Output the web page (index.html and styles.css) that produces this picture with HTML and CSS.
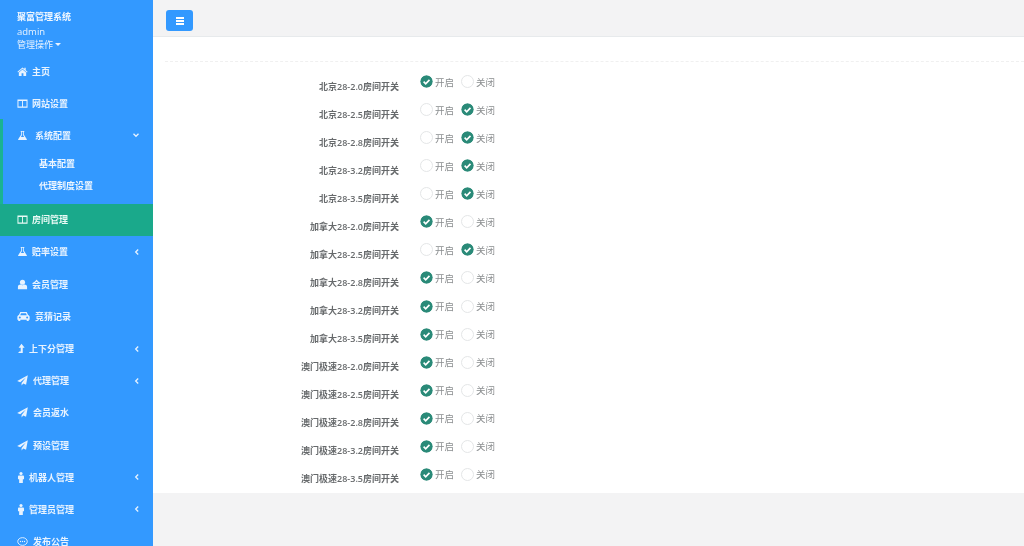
FILE: index.html
```html
<!DOCTYPE html>
<html lang="zh">
<head>
<meta charset="utf-8">
<title>房间管理</title>
<link rel="stylesheet" href="styles.css">
</head>
<body>
<svg class="defs" width="0" height="0">
  <symbol id="i-home" viewBox="0 0 12 12"><path d="M6 1.500 .5 6.300l.6.7L6 2.900l4.900 4.100.6-.7-2-1.800V2H8v1.200zM2 7.200V11h3V8h2v3h3V7.200L6 3.800z" fill="currentColor"/></symbol>
  <symbol id="i-table" viewBox="0 0 12 12"><path d="M.5 1.500h11v9H.5zM1.600 3.200v6.200h3.900V3.200zm4.900 0v6.200h3.900V3.200z" fill="currentColor" fill-rule="evenodd"/></symbol>
  <symbol id="i-flask" viewBox="0 0 12 12"><path d="M4 1h4v1h-.6v3l3.300 5.200c.3.500 0 .8-.5.800H1.800c-.5 0-.8-.3-.5-.8L4.600 5V2H4zm1.500 1v3.400L4.200 7.500h3.600L6.500 5.400V2z" fill="currentColor" fill-rule="evenodd"/></symbol>
  <symbol id="i-user" viewBox="0 0 12 12"><circle cx="6" cy="3.500" r="2.800" fill="currentColor"/><path d="M1 11.200V8.500C1 7 2.500 6.200 4 6.100c1.200.8 2.800.8 4 0 1.500.1 3 .9 3 2.400v2.700z" fill="currentColor"/></symbol>
  <symbol id="i-car" viewBox="0 0 14 12"><path d="M3.500 1h7l1.500 3.400c.9.300 1.700 1.100 1.700 2v3.100h-1V11h-2.200V9.500H3.500V11H1.300V9.500h-1V6.400c0-.9.800-1.700 1.700-2zm.8 1.400-.9 2.200h7.200l-.9-2.200zM3 5.900a1.100 1.100 0 1 0 0 2.200 1.100 1.100 0 0 0 0-2.200zm8 0a1.100 1.100 0 1 0 0 2.200 1.100 1.100 0 0 0 0-2.200z" fill="currentColor" fill-rule="evenodd"/></symbol>
  <symbol id="i-up" viewBox="2 0 8 12"><path d="M6.500.8 10 5.200H7.900V11H2.800l1.400-1.800h1.500V5.200H3.400z" fill="currentColor"/></symbol>
  <symbol id="i-plane" viewBox="0 0 12 12"><path d="M11.800.3 9.900 10.500 6.800 9.200 5 11.500V8.700L9.700 2.800 3.500 7.900 .2 6.500z" fill="currentColor"/></symbol>
  <symbol id="i-male" viewBox="2 0 8 12"><circle cx="6" cy="1.700" r="1.700" fill="currentColor"/><path d="M3.900 3.700h4.200c.7 0 1.200.5 1.200 1.200v3.100H8V12H4V8H2.700V4.900c0-.7.500-1.200 1.200-1.200z" fill="currentColor"/></symbol>
  <symbol id="i-chat" viewBox="0 0 12 12"><ellipse cx="6" cy="6" rx="5.200" ry="4.200" fill="none" stroke="currentColor"/><circle cx="3.800" cy="6" r=".7" fill="currentColor"/><circle cx="6" cy="6" r=".7" fill="currentColor"/><circle cx="8.200" cy="6" r=".7" fill="currentColor"/></symbol>
  <symbol id="i-left" viewBox="0 0 8 8"><path d="M5.200 1.500 2.700 4l2.500 2.500" fill="none" stroke="currentColor" stroke-width="1.300"/></symbol>
  <symbol id="i-down" viewBox="0 0 8 8"><path d="M1.500 2.800 4 5.300l2.500-2.500" fill="none" stroke="currentColor" stroke-width="1.300"/></symbol>
  <symbol id="i-check" viewBox="0 0 14 14"><circle cx="7" cy="7" r="6.700" fill="currentColor"/><path d="M3.900 7.200l2.200 2.200L10.200 5.200" fill="none" stroke="#fff" stroke-width="1.800"/></symbol>
</svg>
<div class="app">
  <aside class="sidebar">
    <div class="profile">
      <div class="brand">聚富管理系统</div>
      <div class="who">admin</div>
      <div class="ops">管理操作<span class="caret"></span></div>
    </div>
    <nav class="nav">
      <a class="item"><svg class="ico"><use href="#i-home"/></svg><span>主页</span></a>
      <a class="item"><svg class="ico"><use href="#i-table"/></svg><span>网站设置</span></a>
      <div class="group">
        <a class="item item-open"><svg class="ico"><use href="#i-flask"/></svg><span>系统配置</span><svg class="arrow"><use href="#i-down"/></svg></a>
        <a class="sub">基本配置</a>
        <a class="sub">代理制度设置</a>
      </div>
      <a class="item active"><svg class="ico"><use href="#i-table"/></svg><span>房间管理</span></a>
      <a class="item"><svg class="ico"><use href="#i-flask"/></svg><span>赔率设置</span><svg class="arrow"><use href="#i-left"/></svg></a>
      <a class="item"><svg class="ico"><use href="#i-user"/></svg><span>会员管理</span></a>
      <a class="item"><svg class="ico ico-wide"><use href="#i-car"/></svg><span>竞猜记录</span></a>
      <a class="item"><svg class="ico ico-thin"><use href="#i-up"/></svg><span>上下分管理</span><svg class="arrow"><use href="#i-left"/></svg></a>
      <a class="item"><svg class="ico ico-plane"><use href="#i-plane"/></svg><span>代理管理</span><svg class="arrow"><use href="#i-left"/></svg></a>
      <a class="item"><svg class="ico ico-plane"><use href="#i-plane"/></svg><span>会员返水</span></a>
      <a class="item"><svg class="ico ico-plane"><use href="#i-plane"/></svg><span>预设管理</span></a>
      <a class="item"><svg class="ico ico-thin"><use href="#i-male"/></svg><span>机器人管理</span><svg class="arrow"><use href="#i-left"/></svg></a>
      <a class="item"><svg class="ico ico-thin"><use href="#i-male"/></svg><span>管理员管理</span><svg class="arrow"><use href="#i-left"/></svg></a>
      <a class="item"><svg class="ico ico-plane"><use href="#i-chat"/></svg><span>发布公告</span></a>
    </nav>
  </aside>
  <main class="main">
    <header class="topbar"><button class="menu-btn"><i></i><i></i><i></i></button></header>
    <section class="panel">
      <div class="rule"></div>
      <form class="rows">
        <div class="row"><label class="name">北京28-2.0房间开关</label><div class="opts"><span class="opt"><svg class="radio on"><use href="#i-check"/></svg>开启</span><span class="opt"><i class="radio"></i>关闭</span></div></div>
        <div class="row"><label class="name">北京28-2.5房间开关</label><div class="opts"><span class="opt"><i class="radio"></i>开启</span><span class="opt"><svg class="radio on"><use href="#i-check"/></svg>关闭</span></div></div>
        <div class="row"><label class="name">北京28-2.8房间开关</label><div class="opts"><span class="opt"><i class="radio"></i>开启</span><span class="opt"><svg class="radio on"><use href="#i-check"/></svg>关闭</span></div></div>
        <div class="row"><label class="name">北京28-3.2房间开关</label><div class="opts"><span class="opt"><i class="radio"></i>开启</span><span class="opt"><svg class="radio on"><use href="#i-check"/></svg>关闭</span></div></div>
        <div class="row"><label class="name">北京28-3.5房间开关</label><div class="opts"><span class="opt"><i class="radio"></i>开启</span><span class="opt"><svg class="radio on"><use href="#i-check"/></svg>关闭</span></div></div>
        <div class="row"><label class="name">加拿大28-2.0房间开关</label><div class="opts"><span class="opt"><svg class="radio on"><use href="#i-check"/></svg>开启</span><span class="opt"><i class="radio"></i>关闭</span></div></div>
        <div class="row"><label class="name">加拿大28-2.5房间开关</label><div class="opts"><span class="opt"><i class="radio"></i>开启</span><span class="opt"><svg class="radio on"><use href="#i-check"/></svg>关闭</span></div></div>
        <div class="row"><label class="name">加拿大28-2.8房间开关</label><div class="opts"><span class="opt"><svg class="radio on"><use href="#i-check"/></svg>开启</span><span class="opt"><i class="radio"></i>关闭</span></div></div>
        <div class="row"><label class="name">加拿大28-3.2房间开关</label><div class="opts"><span class="opt"><svg class="radio on"><use href="#i-check"/></svg>开启</span><span class="opt"><i class="radio"></i>关闭</span></div></div>
        <div class="row"><label class="name">加拿大28-3.5房间开关</label><div class="opts"><span class="opt"><svg class="radio on"><use href="#i-check"/></svg>开启</span><span class="opt"><i class="radio"></i>关闭</span></div></div>
        <div class="row"><label class="name">澳门极速28-2.0房间开关</label><div class="opts"><span class="opt"><svg class="radio on"><use href="#i-check"/></svg>开启</span><span class="opt"><i class="radio"></i>关闭</span></div></div>
        <div class="row"><label class="name">澳门极速28-2.5房间开关</label><div class="opts"><span class="opt"><svg class="radio on"><use href="#i-check"/></svg>开启</span><span class="opt"><i class="radio"></i>关闭</span></div></div>
        <div class="row"><label class="name">澳门极速28-2.8房间开关</label><div class="opts"><span class="opt"><svg class="radio on"><use href="#i-check"/></svg>开启</span><span class="opt"><i class="radio"></i>关闭</span></div></div>
        <div class="row"><label class="name">澳门极速28-3.2房间开关</label><div class="opts"><span class="opt"><svg class="radio on"><use href="#i-check"/></svg>开启</span><span class="opt"><i class="radio"></i>关闭</span></div></div>
        <div class="row"><label class="name">澳门极速28-3.5房间开关</label><div class="opts"><span class="opt"><svg class="radio on"><use href="#i-check"/></svg>开启</span><span class="opt"><i class="radio"></i>关闭</span></div></div>
      </form>
    </section>
  </main>
</div>
</body>
</html>
```
FILE: styles.css
```css
* { box-sizing: border-box; }
html, body { margin: 0; height: 546px; overflow: hidden; }
body { font-family: "Open Sans", "Noto Sans CJK SC", sans-serif; font-size: 9px; color: #676a6c; background: #f3f3f4; }
.defs { position: absolute; }
.app { display: flex; height: 546px; overflow: hidden; filter: blur(0.35px); }

.sidebar { width: 153px; flex: none; background: #3399ff; color: #e8f3ff; font-weight: 600; }
.profile { height: 55px; padding: 10px 0 0 17px; font-size: 9px; line-height: 13px; }
.brand { color: #f0f7ff; margin-bottom: 2px; }
.who { font-size: 9.500px; font-weight: 400; line-height: 13px; }
.ops { font-weight: 400; }
.caret { display: inline-block; margin-left: 2px; vertical-align: 2px; border: 3px solid transparent; border-top-color: #e8f3ff; border-bottom: 0; }

.nav { display: flex; flex-direction: column; }
.item { display: flex; align-items: center; height: 32.200px; padding-left: 17px; font-size: 9px; }
.item span { margin-left: 4px; }
.ico { width: 11px; height: 11px; flex: none; }
.ico-wide { width: 13px; margin-right: 1px; }
.ico-thin { width: 8px; }
.ico-plane { width: 11px; margin-right: 1px; }
.arrow { width: 8px; height: 8px; margin-left: auto; margin-right: 12px; flex: none; }
.group { border-left: 3px solid #1ab394; height: 84.500px; }
.item-open { height: 32.200px; padding-left: 14px; }
.item-open .arrow { margin-right: 13px; }
.item-open span { margin-left: 7px; }
.sub { display: block; padding-left: 36px; height: 22px; line-height: 24px; font-size: 9px; color: #eef6ff; }
.active { background: #1aa98b; height: 32px; color: #eafaf6; }

.main { flex: 1; display: flex; flex-direction: column; background: #f3f3f4; }
.topbar { height: 37px; flex: none; padding: 10px 0 0 13px; background: #f3f3f4; border-bottom: 1px solid #e7eaec; }
.menu-btn { display: flex; flex-direction: column; justify-content: center; gap: 1px; align-items: center; width: 27px; height: 21px; padding: 0; border: 0; border-radius: 3px; background: #3399ff; }
.menu-btn i { display: block; width: 8px; height: 2px; background: #fff; }

.panel { height: 456px; background: #fff; padding-top: 24px; }
.rule { height: 1px; margin: 0 0 6px 12px; border-top: 1px dashed #f0f0f0; }
.rows { display: flex; flex-direction: column; }
.row { display: flex; height: 28.070px; }
.name { width: 246px; flex: none; padding-top: 11.500px; text-align: right; font-weight: 600; line-height: 14px; color: #676a6c; }
.opts { display: flex; margin-left: 21px; padding-top: 6.500px; }
.opt { display: flex; align-items: center; width: 41px; height: 14px; color: #8a8d8f; font-size: 9.500px; }
.radio { display: block; width: 13px; height: 13px; margin-right: 2px; flex: none; border: 1px solid #e4e6e7; border-radius: 50%; background: #fff; }
.radio.on { border: 0; color: #2a8a78; background: none; }
```
